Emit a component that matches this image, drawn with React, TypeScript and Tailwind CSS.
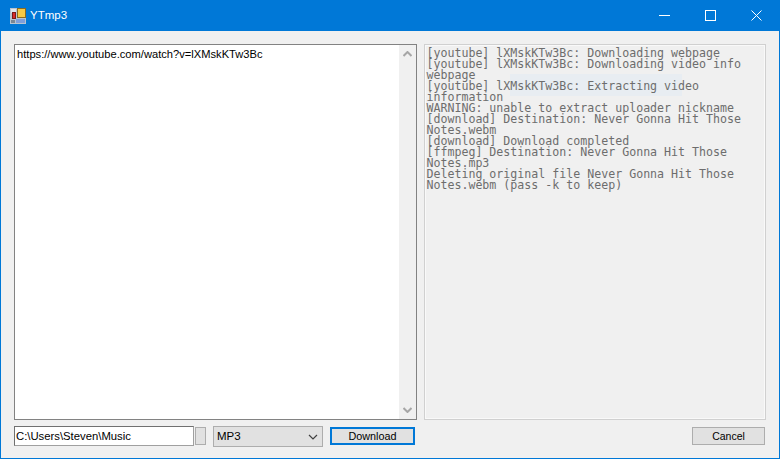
import React from 'react';

const logLines = [
  '[youtube] lXMskKTw3Bc: Downloading webpage',
  '[youtube] lXMskKTw3Bc: Downloading video info',
  'webpage',
  '[youtube] lXMskKTw3Bc: Extracting video',
  'information',
  'WARNING: unable to extract uploader nickname',
  '[download] Destination: Never Gonna Hit Those',
  'Notes.webm',
  '[download] Download completed',
  '[ffmpeg] Destination: Never Gonna Hit Those',
  'Notes.mp3',
  'Deleting original file Never Gonna Hit Those',
  'Notes.webm (pass -k to keep)'
];

const AppIcon: React.FC = () => (
  <svg width="16" height="16" viewBox="0 0 16 16" shapeRendering="crispEdges">
    <rect x="0" y="0" width="16" height="16" fill="#b9c4d0" />
    <rect x="1" y="1" width="5" height="4" fill="#dfe6ee" />
    <rect x="7" y="0" width="9" height="10" fill="#8a6a20" />
    <rect x="8" y="1" width="7" height="8" fill="#f6c945" />
    <rect x="2" y="4" width="4" height="7" fill="#7a1a1a" />
    <rect x="3" y="5" width="2" height="5" fill="#d92a2a" />
    <rect x="6" y="11" width="9" height="4" fill="#7f9fdc" />
    <rect x="1" y="12" width="4" height="3" fill="#7c8794" />
  </svg>
);

export default function App() {
  return (
    <div className="flex h-[459px] w-[780px] flex-col overflow-hidden border border-t-0 border-[#0078d7] bg-[#f0f0f0] font-['Liberation_Sans',Arial,sans-serif] text-[11px] text-black">
      <div className="flex h-[31px] shrink-0 items-center bg-[#0078d7] pl-[9px] text-white">
        <AppIcon />
        <span className="ml-[4px] text-[11.5px]">YTmp3</span>
        <div className="ml-auto flex h-full">
          <button className="flex w-[46px] items-center justify-center">
            <svg width="11" height="11" viewBox="0 0 11 11" shapeRendering="crispEdges">
              <rect x="0" y="5" width="11" height="1" fill="#fff" />
            </svg>
          </button>
          <button className="flex w-[46px] items-center justify-center">
            <svg width="11" height="11" viewBox="0 0 11 11" shapeRendering="crispEdges">
              <rect x="0.5" y="0.5" width="10" height="10" fill="none" stroke="#fff" />
            </svg>
          </button>
          <button className="flex w-[46px] items-center justify-center">
            <svg width="11" height="11" viewBox="0 0 11 11">
              <path d="M0.5 0.5L10.5 10.5M10.5 0.5L0.5 10.5" stroke="#fff" strokeWidth="1" fill="none" />
            </svg>
          </button>
        </div>
      </div>

      <div className="flex min-h-0 flex-1 flex-col px-[13px] pb-[11px] pt-[13px]">
        <div className="flex h-[376px] gap-[7px]">
          <div className="flex w-[404px] border border-[#828282] bg-white">
            <div className="flex-1 pl-[2px] pt-[2px] text-[11.15px] leading-[15px]">
              https://www.youtube.com/watch?v=lXMskKTw3Bc
            </div>
            <div className="flex w-[17px] flex-col items-center justify-between bg-[#f0f0f0] py-[6px]">
              <svg width="9" height="6" viewBox="0 0 9 6">
                <path d="M0.5 5L4.5 1L8.5 5" stroke="#a6a6a6" strokeWidth="2" fill="none" />
              </svg>
              <svg width="9" height="6" viewBox="0 0 9 6">
                <path d="M0.5 1L4.5 5L8.5 1" stroke="#a6a6a6" strokeWidth="2" fill="none" />
              </svg>
            </div>
          </div>
          <div className="relative w-[342px] border border-[#d0d0d0] bg-[#f0f0f0] pl-[1px] pt-[3px] font-['DejaVu_Sans_Mono',monospace] text-[11.62px] leading-[11px] text-[#6d6d6d] shadow-[inset_0_0_0_1px_#f9f9f9]">
            <div className="absolute left-[85px] top-[29px] h-[22px] w-[172px] bg-[#e8edf2]" />
            <div className="relative">
              {logLines.map((line) => (
                <div key={line} className="h-[11px] whitespace-pre">
                  {line}
                </div>
              ))}
            </div>
          </div>
        </div>

        <div className="mt-[6px] flex h-[21px] items-start">
          <div className="h-[20px] w-[180px] border border-b-[#a0a0a0] border-l-[#707070] border-r-[#a0a0a0] border-t-[#707070] bg-white pl-[1px] text-[11.3px] leading-[18px]">
            C:\Users\Steven\Music
          </div>
          <div className="ml-[1px] mt-[1px] h-[18px] w-[11px] border border-[#adadad] bg-[#e1e1e1]" />
          <div className="ml-[7px] flex h-[21px] w-[110px] items-center justify-between border border-[#adadad] bg-[#e1e1e1] pl-[3px] pr-[4px] text-[11.5px]">
            <span>MP3</span>
            <svg width="10" height="6" viewBox="0 0 10 6">
              <path d="M1 1L5 5L9 1" stroke="#404040" strokeWidth="1.2" fill="none" />
            </svg>
          </div>
          <button className="ml-[7px] mt-[1px] h-[18px] w-[85px] border-2 border-[#0078d7] bg-[#e1e1e1] text-[10.8px] leading-[14px]">
            Download
          </button>
          <button className="mr-[1px] ml-auto mt-[1px] h-[18px] w-[73px] border border-[#adadad] bg-[#e1e1e1] text-[10.5px] leading-[16px]">
            Cancel
          </button>
        </div>
      </div>
    </div>
  );
}
